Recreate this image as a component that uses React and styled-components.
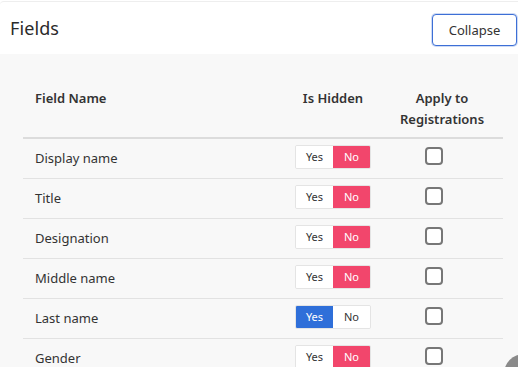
import React from "react";
import styled, { createGlobalStyle } from "styled-components";

const Global = createGlobalStyle`
  html, body { margin: 0; padding: 0; background: #fff; }
  body { font-family: "Noto Sans", "Open Sans", sans-serif; color: #333; overflow: hidden; }
  *, *::before, *::after { box-sizing: border-box; }
`;

const Page = styled.div`
  position: relative;
  width: 518px;
  height: 367px;
  overflow: hidden;
  padding-top: 1px;
`;

const Header = styled.div`
  display: flex;
  align-items: center;
  justify-content: space-between;
  height: 53px;
  border-top: 1px solid #eeeeee;
  border-radius: 4px 0 0 0;
  padding: 0 1px 0 10px;
  background: #fff;
`;

const Title = styled.h2`
  margin: 0;
  font-size: 18px;
  font-weight: 400;
  color: #2b2b2b;
  letter-spacing: 0.1px;
`;

const CollapseButton = styled.button`
  height: 32px;
  width: 85px;
  border: 1px solid #3d6fd6;
  border-radius: 4px;
  background: #fff;
  box-shadow: 0 0 0 1px rgba(61, 111, 214, 0.25);
  font-family: inherit;
  font-size: 13px;
  color: #333;
  padding: 0;
  margin-top: 3px;
`;

const Body = styled.div`
  background: #f8f8f8;
  padding: 26px 15px 0 23px;
  height: 320px;
`;

const Table = styled.table`
  width: 480px;
  border-collapse: collapse;
  table-layout: fixed;
`;

const Col = styled.col`
  width: ${(p) => p.$w}px;
`;

const Th = styled.th`
  text-align: ${(p) => p.$align || "center"};
  vertical-align: top;
  font-size: 13px;
  font-weight: 600;
  line-height: 21px;
  color: #333;
  padding: 8px ${(p) => p.$pr ?? 4}px 7px ${(p) => p.$pl ?? 4}px;
  border-bottom: 2px solid #dcdcdc;
`;

const Tr = styled.tr`
  height: 40px;
  border-bottom: 1px solid #e2e2e2;
`;

const Td = styled.td`
  text-align: ${(p) => p.$align || "center"};
  vertical-align: middle;
  font-size: 13px;
  color: #333;
  padding: 0 ${(p) => (p.$align === "left" ? "12px" : "0")};
  line-height: 18px;
`;

const Toggle = styled.div`
  display: inline-flex;
  height: 24px;
  border: 1px solid #e4e4e4;
  border-radius: 2px;
  overflow: hidden;
  vertical-align: middle;
  margin-top: -2px;
`;

const Seg = styled.span`
  display: flex;
  align-items: center;
  justify-content: center;
  width: 37px;
  font-size: 11px;
  color: ${(p) => (p.$on ? "#fff" : "#333")};
  background: ${(p) => (p.$on ? p.$color : "#fff")};
`;

const Check = styled.span`
  display: inline-block;
  width: 18px;
  height: 18px;
  border: 2px solid #777;
  border-radius: 4px;
  background: #fff;
  vertical-align: middle;
  margin-top: -8px;
  margin-right: 31px;
`;

const Corner = styled.div`
  position: absolute;
  right: -26px;
  bottom: -27px;
  width: 40px;
  height: 40px;
  border-radius: 50%;
  background: #8a8a8a;
`;

const rows = [
  { name: "Display name", hidden: false },
  { name: "Title", hidden: false },
  { name: "Designation", hidden: false },
  { name: "Middle name", hidden: false },
  { name: "Last name", hidden: true },
  { name: "Gender", hidden: false },
];

export default function App() {
  return (
    <Page>
      <Global />
      <Header>
        <Title>Fields</Title>
        <CollapseButton>Collapse</CollapseButton>
      </Header>
      <Body>
        <Table>
          <colgroup>
            <Col $w={248} />
            <Col $w={124} />
            <Col $w={108} />
          </colgroup>
          <thead>
            <tr>
              <Th $align="left" $pl={12} $pr={12}>Field Name</Th>
              <Th>Is Hidden</Th>
              <Th $pl={0} $pr={14}>Apply to Registrations</Th>
            </tr>
          </thead>
          <tbody>
            {rows.map((r) => (
              <Tr key={r.name}>
                <Td $align="left">{r.name}</Td>
                <Td>
                  <Toggle>
                    <Seg $on={r.hidden} $color="#2f6fd9">Yes</Seg>
                    <Seg $on={!r.hidden} $color="#f2466c">No</Seg>
                  </Toggle>
                </Td>
                <Td>
                  <Check />
                </Td>
              </Tr>
            ))}
          </tbody>
        </Table>
      </Body>
      <Corner />
    </Page>
  );
}
